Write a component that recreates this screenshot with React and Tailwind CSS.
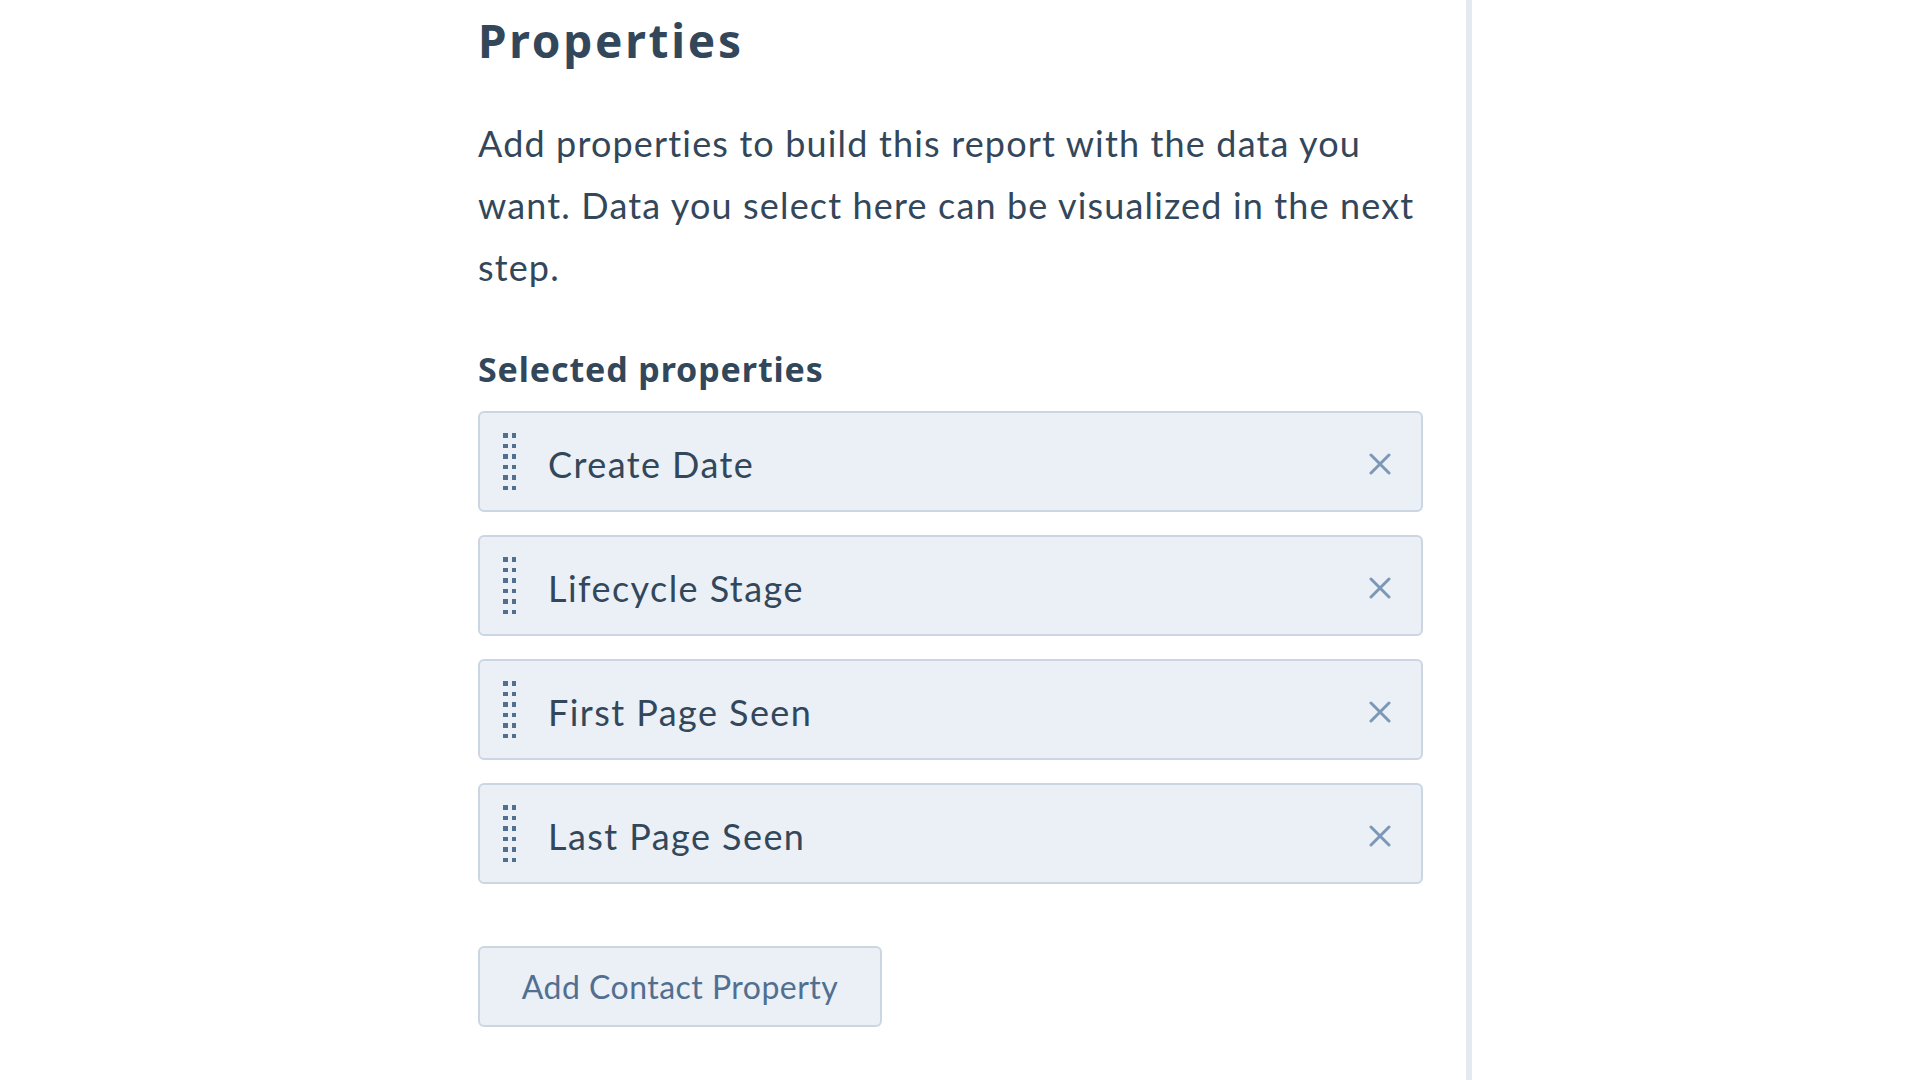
import React from "react";

const selected = ["Create Date", "Lifecycle Stage", "First Page Seen", "Last Page Seen"];

function DragHandle() {
  return (
    <div className="grid grid-cols-2 gap-x-[4px] gap-y-[6px]" aria-hidden="true">
      {Array.from({ length: 12 }).map((_, i) => (
        <span key={i} className="block h-[4.5px] w-[4.5px] bg-[#516f90]" />
      ))}
    </div>
  );
}

function CloseIcon() {
  return (
    <svg width="22" height="22" viewBox="0 0 22 22" aria-hidden="true">
      <path d="M2 2 L20 20 M20 2 L2 20" stroke="#7c98b6" strokeWidth="3" strokeLinecap="round" fill="none" />
    </svg>
  );
}

function PropertyRow({ label }) {
  return (
    <div className="flex h-[101px] items-center rounded-[6px] border-2 border-[#cbd6e2] bg-[#eaf0f6] pl-[23px] pr-[30px]">
      <DragHandle />
      <span className="ml-[32px] flex-1 pt-[4px] text-[36px] leading-none tracking-[0.04em] text-[#33475b]">{label}</span>
      <button type="button" className="flex items-center justify-center pt-[4px]">
        <CloseIcon />
      </button>
    </div>
  );
}

export default function App() {
  return (
    <div className="flex h-[1080px] w-full overflow-hidden bg-white font-['Lato',sans-serif] text-[#33475b]">
      <div className="w-[478px] shrink-0" />
      <main className="w-[945px] shrink-0 pt-[12px]">
        <h1 className="font-['Noto_Sans',sans-serif] text-[46px] font-bold leading-[56px] tracking-[0.06em]">Properties</h1>
        <p className="mt-[44px] text-[36px] leading-[62px] tracking-[0.032em]">
          Add properties to build this report with the data you want. Data you select here can be visualized in the next step.
        </p>
        <h2 className="mt-[50px] font-['Noto_Sans',sans-serif] text-[34px] font-bold leading-[42px] tracking-[0.026em]">
          Selected properties
        </h2>
        <div className="mt-[21px] flex flex-col gap-[23px]">
          {selected.map((label) => (
            <PropertyRow key={label} label={label} />
          ))}
        </div>
        <button
          type="button"
          className="mt-[62px] flex h-[81px] w-[404px] items-center justify-center rounded-[6px] border-2 border-[#cbd6e2] bg-[#eaf0f6] text-[32px] tracking-[0.015em] text-[#516f90]"
        >
          Add Contact Property
        </button>
      </main>
      <div className="w-[43px] shrink-0" />
      <aside className="flex-1 border-l-[6px] border-[#e5eaf0]" />
    </div>
  );
}
